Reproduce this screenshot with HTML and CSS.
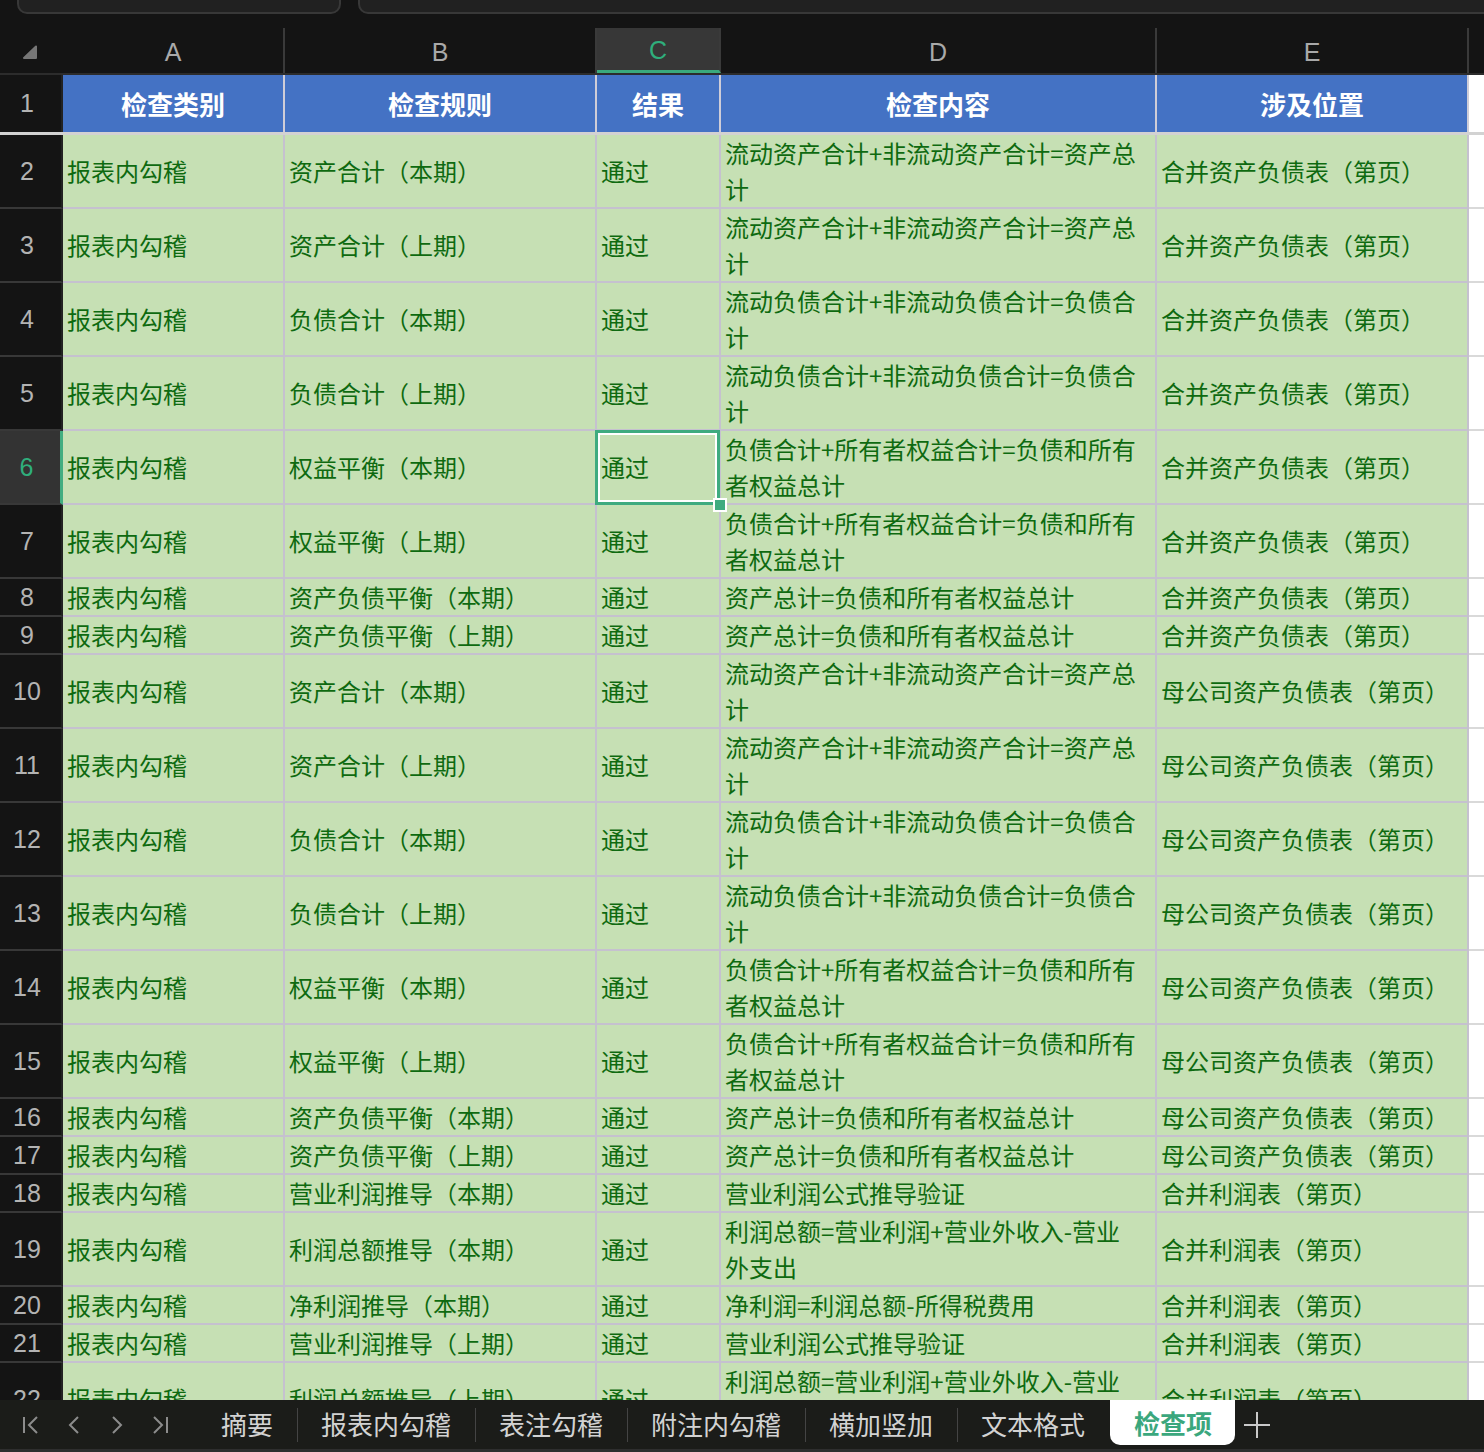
FILE: index.html
```html
<!DOCTYPE html>
<html lang="zh-CN">
<head>
    <meta charset="UTF-8">
    <meta name="viewport" content="width=device-width, initial-scale=1.0">
    <title>检查项</title>
    <link rel="stylesheet" href="styles.css">
</head>
<body>
    <div class="app">
        <div class="toolbar">
            <div class="field name-box"></div>
            <div class="field formula-box"></div>
        </div>

        <div class="sheet">
            <div class="col-heads">
                <div class="corner">
                    <svg width="16" height="16" viewBox="0 0 16 16"><path d="M2 14 L14 2.5 L14 14 Z" fill="#767676" stroke="#767676" stroke-width="2" stroke-linejoin="round"/></svg>
                </div>
                <div class="col-head">A</div>
                <div class="col-head">B</div>
                <div class="col-head current">C</div>
                <div class="col-head">D</div>
                <div class="col-head">E</div>
                <div class="col-head filler"></div>
            </div>

            <div class="row head-row">
                <div class="row-head">1</div>
                <div class="cell">检查类别</div>
                <div class="cell">检查规则</div>
                <div class="cell">结果</div>
                <div class="cell">检查内容</div>
                <div class="cell">涉及位置</div>
                <div class="cell filler"></div>
            </div>

            <div id="rows"></div>
        </div>

        <div class="tabbar">
            <div class="nav-btn">
                <svg width="20" height="22" viewBox="0 0 20 22"><path d="M3 3 V19 M16 3 L8 11 L16 19" fill="none" stroke="#8c8c8c" stroke-width="2"/></svg>
            </div>
            <div class="nav-btn">
                <svg width="20" height="22" viewBox="0 0 20 22"><path d="M14 3 L6 11 L14 19" fill="none" stroke="#8c8c8c" stroke-width="2"/></svg>
            </div>
            <div class="nav-btn">
                <svg width="20" height="22" viewBox="0 0 20 22"><path d="M6 3 L14 11 L6 19" fill="none" stroke="#8c8c8c" stroke-width="2"/></svg>
            </div>
            <div class="nav-btn">
                <svg width="20" height="22" viewBox="0 0 20 22"><path d="M4 3 L12 11 L4 19 M17 3 V19" fill="none" stroke="#8c8c8c" stroke-width="2"/></svg>
            </div>

            <div class="tabs">
                <div class="tab">摘要</div>
                <div class="divider"></div>
                <div class="tab">报表内勾稽</div>
                <div class="divider"></div>
                <div class="tab">表注勾稽</div>
                <div class="divider"></div>
                <div class="tab">附注内勾稽</div>
                <div class="divider"></div>
                <div class="tab">横加竖加</div>
                <div class="divider"></div>
                <div class="tab">文本格式</div>
                <div class="tab active">检查项</div>
                <div class="add-tab">
                    <svg width="28" height="28" viewBox="0 0 28 28"><path d="M14 1 V27 M1 14 H27" stroke="#c9c9c9" stroke-width="2"/></svg>
                </div>
            </div>
        </div>
        <div class="status-strip"></div>
    </div>

    <script>
        const bs = '合并资产负债表（第页）';
        const parentBs = '母公司资产负债表（第页）';
        const pl = '合并利润表（第页）';
        const assets = '流动资产合计+非流动资产合计=资产总\n计';
        const debts = '流动负债合计+非流动负债合计=负债合\n计';
        const equity = '负债合计+所有者权益合计=负债和所有\n者权益总计';
        const balance = '资产总计=负债和所有者权益总计';
        const profit = '利润总额=营业利润+营业外收入-营业\n外支出';

        // [rule, content, location, tall]
        const data = [
            ['资产合计（本期）', assets, bs, true],
            ['资产合计（上期）', assets, bs, true],
            ['负债合计（本期）', debts, bs, true],
            ['负债合计（上期）', debts, bs, true],
            ['权益平衡（本期）', equity, bs, true],
            ['权益平衡（上期）', equity, bs, true],
            ['资产负债平衡（本期）', balance, bs, false],
            ['资产负债平衡（上期）', balance, bs, false],
            ['资产合计（本期）', assets, parentBs, true],
            ['资产合计（上期）', assets, parentBs, true],
            ['负债合计（本期）', debts, parentBs, true],
            ['负债合计（上期）', debts, parentBs, true],
            ['权益平衡（本期）', equity, parentBs, true],
            ['权益平衡（上期）', equity, parentBs, true],
            ['资产负债平衡（本期）', balance, parentBs, false],
            ['资产负债平衡（上期）', balance, parentBs, false],
            ['营业利润推导（本期）', '营业利润公式推导验证', pl, false],
            ['利润总额推导（本期）', profit, pl, true],
            ['净利润推导（本期）', '净利润=利润总额-所得税费用', pl, false],
            ['营业利润推导（上期）', '营业利润公式推导验证', pl, false],
            ['利润总额推导（上期）', profit, pl, true]
        ];

        const rowsContainer = document.getElementById('rows');
        let html = '';

        data.forEach((row, i) => {
            const num = i + 2;
            const selected = num === 6; // cell C6 is selected
            html += `
                <div class="row ${row[3] ? 'tall' : 'short'}">
                    <div class="row-head ${selected ? 'active' : ''}">${num}</div>
                    <div class="cell">报表内勾稽</div>
                    <div class="cell">${row[0]}</div>
                    <div class="cell ${selected ? 'selected' : ''}">通过${selected ? '<span class="handle"></span>' : ''}</div>
                    <div class="cell">${row[1]}</div>
                    <div class="cell">${row[2]}</div>
                    <div class="cell filler"></div>
                </div>
            `;
        });

        rowsContainer.innerHTML = html;
    </script>
</body>
</html>
```

FILE: styles.css
```css
* {
    box-sizing: border-box;
}
body {
    margin: 0;
    background-color: #141414;
    font-family: "Noto Sans CJK SC", "Liberation Sans", sans-serif;
    overflow: hidden;
}
.app {
    height: 1452px;
    display: flex;
    flex-direction: column;
}

/* top bar with the name box and formula field */
.toolbar {
    height: 28px;
    flex: none;
    display: flex;
    padding-left: 17px;
    gap: 17px;
    overflow: hidden;
}
.field {
    height: 34px;
    margin-top: -20px;
    background-color: #212121;
    border: 2px solid #383838;
    border-radius: 10px;
}
.name-box {
    width: 324px;
}
.formula-box {
    flex: 1;
    margin-right: -20px;
}

/* sheet grid */
.sheet {
    flex: 1;
    overflow: hidden;
}
.col-heads,
.row {
    display: grid;
    grid-template-columns: 63px 222px 312px 124px 436px 312px 1fr;
    grid-template-rows: 100%;
}
.col-heads {
    height: 47px;
    border-bottom: 2px solid #2c2c2c;
}
.corner {
    display: flex;
    align-items: flex-end;
    padding: 0 0 13px 22px;
}
.col-head {
    display: flex;
    align-items: center;
    justify-content: center;
    padding-top: 4px;
    border-right: 2px solid #3a3a3a;
    color: #a9a9a9;
    font-family: "Liberation Sans", sans-serif;
    font-size: 25px;
}
.col-head.current {
    background-color: #373737;
    color: #2fae7c;
    border-bottom: 3px solid #3aa97c;
    padding-top: 3px;
}
.col-head.filler {
    border-right: none;
}

.row-head {
    display: flex;
    align-items: center;
    justify-content: center;
    padding-right: 7px;
    border-right: 2px solid #222;
    border-bottom: 2px solid #383838;
    color: #b3b3b3;
    font-family: "Liberation Sans", sans-serif;
    font-size: 25px;
}
.row-head.active {
    background-color: #333;
    color: #2fae7c;
    border-right: 3px solid #42ad81;
}

.cell {
    position: relative;
    display: flex;
    align-items: center;
    padding-left: 4px;
    background-color: #c6e0b4;
    border-right: 2px solid #c5c1cf;
    border-bottom: 2px solid #c5c1cf;
    color: #0e6a10;
    font-size: 24px;
    line-height: 36px;
    white-space: pre-line;
}
.cell.filler {
    background-color: #fff;
    border-right: none;
    border-bottom-color: #d9d9d9;
}

.head-row {
    height: 60px;
    border-bottom: 3px solid #d2d2d2;
}
.head-row .cell {
    justify-content: center;
    padding-left: 0;
    background-color: #4472c4;
    border-bottom: none;
    border-right-color: #cfcdd8;
    color: #fff;
    font-size: 26px;
    font-weight: bold;
}
.head-row .cell.filler {
    background-color: #fff;
}
.head-row .row-head {
    border-bottom: none;
}

.row.tall {
    height: 74px;
}
.row.short {
    height: 38px;
}

/* active cell outline */
.cell.selected::after {
    content: "";
    position: absolute;
    top: -1px;
    right: -1px;
    bottom: -2px;
    left: -2px;
    border: 3px solid #3eab7f;
    box-shadow: inset 0 0 0 2px #fff;
}
.handle {
    position: absolute;
    right: -8px;
    bottom: -9px;
    width: 14px;
    height: 14px;
    background-color: #3eab7f;
    border: 2px solid #fff;
    z-index: 2;
}

/* sheet tabs */
.tabbar {
    height: 49px;
    flex: none;
    display: flex;
    align-items: center;
    padding-left: 9px;
    background-color: #1b1c19;
}
.nav-btn {
    width: 43px;
    display: flex;
    justify-content: center;
}
.tabs {
    display: flex;
    align-items: center;
    height: 100%;
    margin-left: 17px;
}
.tab {
    height: 100%;
    display: flex;
    align-items: center;
    padding: 0 24px 2px 23px;
    color: #d2d2d2;
    font-size: 26px;
}
.tab.active {
    height: 45px;
    align-self: flex-start;
    margin-left: 1px;
    background-color: #fff;
    color: #3ba77d;
    font-weight: bold;
    border-radius: 0 0 10px 10px;
    padding: 0 23px 0 24px;
}
.divider {
    width: 1px;
    height: 34px;
    background-color: #444;
}
.add-tab {
    display: flex;
    margin-left: 8px;
}
.status-strip {
    height: 3px;
    flex: none;
    background-color: #2e2e2e;
}
```
